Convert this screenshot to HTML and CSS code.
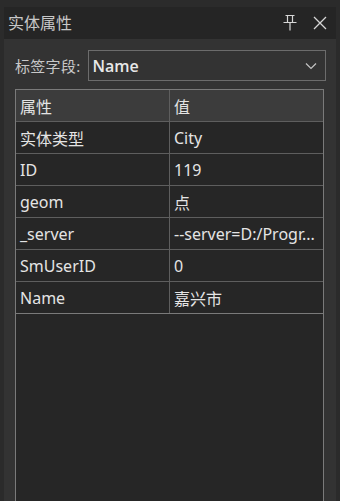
FILE: index.html
```html
<!DOCTYPE html>
<html>
<head>
    <title>实体属性</title>
    <link rel="stylesheet" href="styles.css">
</head>
<body>
    <div class="panel">
        <div class="titlebar">
            <span class="title">实体属性</span>
            <svg class="icon" width="14" height="16" viewBox="0 0 14 16">
                <path d="M2.5 0.5h9M4.5 0.5v7M9.5 0.5v7M0.5 7.5h13M7 7.5v8" stroke="#d6d6d6" stroke-width="1.2" fill="none"/>
            </svg>
            <svg class="icon" width="14" height="14" viewBox="0 0 14 14">
                <path d="M1 1l12 12M13 1L1 13" stroke="#d6d6d6" stroke-width="1.3" fill="none"/>
            </svg>
        </div>

        <div class="toolbar">
            <label class="field-label">标签字段:</label>
            <div class="select">
                <span class="select-text">Name</span>
                <svg width="12" height="8" viewBox="0 0 12 8">
                    <path d="M1 1.5l5 5 5-5" stroke="#c4c4c4" stroke-width="1.2" fill="none"/>
                </svg>
            </div>
        </div>

        <div class="grid">
            <table>
                <thead>
                    <tr>
                        <th>属性</th>
                        <th>值</th>
                    </tr>
                </thead>
                <tbody>
                    <tr><td>实体类型</td><td>City</td></tr>
                    <tr><td>ID</td><td>119</td></tr>
                    <tr><td>geom</td><td>点</td></tr>
                    <tr><td>_server</td><td>--server=D:/Progr...</td></tr>
                    <tr><td>SmUserID</td><td>0</td></tr>
                    <tr><td>Name</td><td>嘉兴市</td></tr>
                </tbody>
            </table>
        </div>
    </div>
</body>
</html>
```

FILE: styles.css
```css
html, body { margin: 0; height: 100%; }
body { background-color: #2b2b2b; font-family: "Noto Sans", "Noto Sans CJK SC", sans-serif; overflow: hidden; }

.panel { margin: 7px 4px 0 4px; height: 494px; background-color: #333333; display: flex; flex-direction: column; }

.titlebar { height: 32px; background-color: #252525; display: flex; align-items: center; padding: 0 9px 0 4px; gap: 16px; }
.title { flex: 1; color: #c8c8c8; font-size: 16px; line-height: 16px; }
.icon { display: block; }

.toolbar { display: flex; align-items: center; padding: 11px 10px 0 11px; gap: 7px; }
.field-label { color: #c8c8c8; font-size: 15px; letter-spacing: 0.3px; }
.select { flex: 1; height: 29px; border: 1px solid #6c6c6c; display: flex; align-items: center; padding: 0 8px 0 4px; }
.select-text { flex: 1; color: #e8e8e8; font-family: "Open Sans", "Noto Sans", sans-serif; font-size: 16px; font-weight: 600; }

.grid { flex: 1; margin: 8px 12px 0 11px; border: 1px solid #7a7a7a; border-bottom: none; background-color: #262626; }
table { width: 100%; border-collapse: collapse; table-layout: fixed; }
th, td { height: 31px; padding: 0 4px; border-bottom: 1px solid #5e5e5e; text-align: left; color: #e4e4e4; font-size: 16px; font-weight: normal; white-space: nowrap; overflow: hidden; }
th:first-child, td:first-child { width: 145px; border-right: 1px solid #5e5e5e; }
th { background-color: #3c3c3c; }
tbody tr:last-child td { border-bottom-color: #7a7a7a; }
```
